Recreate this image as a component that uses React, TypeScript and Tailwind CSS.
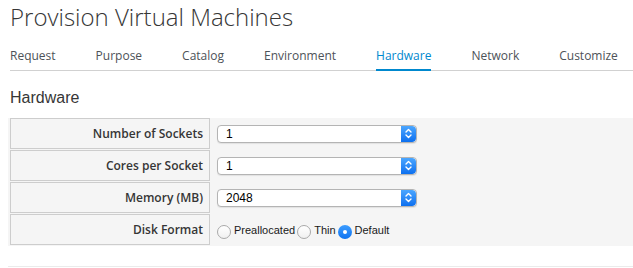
import { ReactNode } from 'react';

const tabs = ['Request', 'Purpose', 'Catalog', 'Environment', 'Hardware', 'Network', 'Customize'];

function Stepper() {
  return (
    <div className="w-[15px] h-full rounded-r-[4px] bg-gradient-to-b from-[#4aa6ff] to-[#0a6fef] flex items-center justify-center">
      <svg width="9" height="13" viewBox="0 0 9 13" fill="none" stroke="white" strokeWidth="1.4" strokeLinecap="round" strokeLinejoin="round">
        <path d="M2 5 L4.5 2.5 L7 5" />
        <path d="M2 8 L4.5 10.5 L7 8" />
      </svg>
    </div>
  );
}

function Select({ value }: { value: string }) {
  return (
    <div className="w-[200px] h-[18px] flex items-stretch bg-white border border-[#b4b4b4] rounded-[4px] shadow-[0_1px_1px_rgba(0,0,0,0.08)] overflow-hidden">
      <span className="flex-1 pl-[8px] text-[12px] leading-[16px] text-black font-['Liberation_Sans',Arial,sans-serif]">{value}</span>
      <Stepper />
    </div>
  );
}

function Radio({ checked, label }: { checked?: boolean; label: string }) {
  return (
    <label className="flex items-center mr-[2px]">
      {checked ? (
        <span className="mt-[5px] w-[14px] h-[14px] rounded-full bg-gradient-to-b from-[#3c9dff] to-[#0b72f0] flex items-center justify-center">
          <span className="w-[4px] h-[4px] rounded-full bg-white" />
        </span>
      ) : (
        <span className="mt-[5px] w-[14px] h-[14px] rounded-full border border-[#a9a9a9] bg-gradient-to-b from-white to-[#f0f0f0]" />
      )}
      <span className="ml-[3px] text-[11px] leading-[14px] text-[#1a1a1a] font-['Liberation_Sans',Arial,sans-serif]">{label}</span>
    </label>
  );
}

function Row({ label, children }: { label: string; children: ReactNode }) {
  return (
    <div className="flex h-[31px]">
      <div className="w-[200px] shrink-0 border border-[#cdcdcd] flex items-center justify-end pr-[6px] text-[12px] font-semibold text-[#363636]">
        {label}
      </div>
      <div className="pl-[7px] flex items-center">{children}</div>
    </div>
  );
}

export default function App() {
  return (
    <div className="w-[633px] h-[268px] overflow-hidden bg-white font-['Open_Sans',sans-serif]">
      <h1 className="pl-[10px] text-[24px] leading-[33px] font-light text-[#363636] whitespace-nowrap">
        Provision Virtual Machines
      </h1>

      <nav className="ml-[10px] mt-[15px] flex gap-10 border-b border-[#d1d1d1]">
        {tabs.map((t) => (
          <span
            key={t}
            className={
              t === 'Hardware'
                ? 'pb-[5px] -mb-[1px] border-b-2 border-[#0088ce] text-[12px] leading-[16px] text-[#0088ce]'
                : 'pb-[5px] -mb-[1px] border-b-2 border-transparent text-[12px] leading-[16px] text-[#4d5258]'
            }
          >
            {t}
          </span>
        ))}
      </nav>

      <h2 className="ml-[10px] mt-[18px] text-[16px] leading-[18px] text-[#363636] font-['Liberation_Sans',Arial,sans-serif]">
        Hardware
      </h2>

      <div className="ml-[8px] mt-[11px] pl-[2px] pb-[1px] bg-[#f5f5f5] flex flex-col gap-[1px]">
        <Row label="Number of Sockets">
          <Select value="1" />
        </Row>
        <Row label="Cores per Socket">
          <Select value="1" />
        </Row>
        <Row label="Memory (MB)">
          <Select value="2048" />
        </Row>
        <Row label="Disk Format">
          <div className="flex items-center">
            <Radio label="Preallocated" />
            <Radio label="Thin" />
            <Radio checked label="Default" />
          </div>
        </Row>
      </div>

      <div className="ml-[8px] mt-[20px] border-t border-[#ebebeb]" />
    </div>
  );
}
